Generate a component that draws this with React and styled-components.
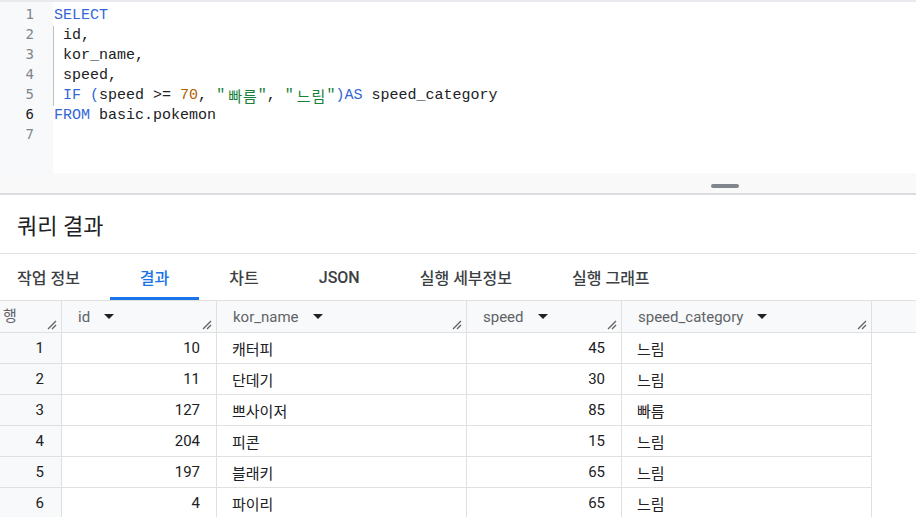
import React from 'react';
import styled, { createGlobalStyle } from 'styled-components';

const GlobalStyle = createGlobalStyle`
  body {
    margin: 0;
    background: #ffffff;
    font-family: Roboto, "Noto Sans CJK KR", sans-serif;
    color: #202124;
  }
`;

const Page = styled.div`
  width: 916px;
  height: 517px;
  overflow: hidden;
  display: flex;
  flex-direction: column;
`;

const Editor = styled.div`
  display: flex;
  height: 171px;
  flex-shrink: 0;
  border-top: 2px solid #e8eaed;
`;

const Gutter = styled.div`
  width: 53px;
  background: #f8f9fa;
  padding-top: 2px;
  box-sizing: border-box;
`;

const LineNo = styled.div`
  height: 20px;
  line-height: 20px;
  padding-right: 19px;
  text-align: right;
  font-family: "DejaVu Sans Mono", monospace;
  font-size: 14px;
  color: ${(p) => (p.current ? '#202124' : '#80868b')};
`;

const Code = styled.div`
  flex: 1;
  padding-top: 4px;
  padding-left: 1px;
  font-family: "Liberation Mono", monospace;
  font-size: 15px;
  color: #202124;
`;

const CodeLine = styled.div`
  height: 20px;
  line-height: 20px;
  white-space: pre;
  border-left: 1px solid ${(p) => (p.guide ? '#bdc1c6' : 'transparent')};
  margin-left: -1px;
`;

const Kw = styled.span`
  color: #3367d6;
`;

const Num = styled.span`
  color: #b06000;
`;

const Str = styled.span`
  color: #188038;
`;

const Hangul = styled.span`
  display: inline-block;
  height: 20px;
  line-height: 20px;
  vertical-align: top;
  font-family: "Noto Sans CJK KR", sans-serif;
  letter-spacing: 1px;
  padding-left: 3px;
`;

const ResizeBar = styled.div`
  height: 22px;
  flex-shrink: 0;
  background: #f9f9f9;
  border-bottom: 2px solid #dadce0;
  display: flex;
  align-items: center;
  padding-left: 711px;
  padding-top: 6px;
  box-sizing: border-box;
`;

const Handle = styled.div`
  width: 28px;
  height: 4px;
  border-radius: 2px;
  background: #80868b;
`;

const Title = styled.div`
  height: 58px;
  flex-shrink: 0;
  display: flex;
  align-items: center;
  padding-left: 17px;
  font-size: 22px;
  color: #202124;
  border-bottom: 1px solid #e0e0e0;
`;

const Tabs = styled.div`
  display: flex;
  height: 46px;
  flex-shrink: 0;
  border-bottom: 1px solid #e0e0e0;
`;

const Tab = styled.div`
  position: relative;
  display: flex;
  align-items: center;
  padding: 0 30px;
  font-size: 16px;
  font-weight: 500;
  color: ${(p) => (p.active ? '#1a73e8' : '#3c4043')};
  &:first-child {
    padding-left: 17px;
  }
  &::after {
    content: '';
    display: ${(p) => (p.active ? 'block' : 'none')};
    position: absolute;
    left: 0;
    right: 0;
    bottom: 0;
    height: 3px;
    background: #1a73e8;
  }
`;

const COLS = '62px 155px 250px 155px 250px';

const HeadRow = styled.div`
  display: grid;
  grid-template-columns: ${COLS} 1fr;
  height: 31px;
  flex-shrink: 0;
  background: #f8f9fa;
  border-bottom: 1px solid #e0e0e0;
`;

const HeadCell = styled.div`
  position: relative;
  display: flex;
  align-items: center;
  gap: 14px;
  padding-left: ${(p) => (p.rownum ? '3px' : '16px')};
  padding-bottom: ${(p) => (p.rownum ? '4px' : '0')};
  font-size: 15px;
  color: #5f6368;
  border-right: 1px solid #e0e0e0;
  &:last-child {
    border-right: none;
  }
`;

const SortArrow = styled.span`
  width: 0;
  height: 0;
  border-left: 5px solid transparent;
  border-right: 5px solid transparent;
  border-top: 5px solid #202124;
`;

const Grip = styled.svg`
  position: absolute;
  right: 4px;
  bottom: 2px;
`;

const BodyRow = styled.div`
  display: grid;
  grid-template-columns: ${COLS};
  width: 872px;
  height: 31px;
  flex-shrink: 0;
`;

const Cell = styled.div`
  display: flex;
  align-items: center;
  justify-content: ${(p) => (p.right ? 'flex-end' : 'flex-start')};
  padding: 0 ${(p) => (p.rownum ? '17px' : p.right ? '16px' : '0')} 0
    ${(p) => (p.right ? '0' : '15px')};
  font-size: 15px;
  color: #202124;
  background: ${(p) => (p.rownum ? '#f8f9fa' : '#ffffff')};
  border-right: 1px solid #e0e0e0;
  border-bottom: 1px solid #e0e0e0;
`;

const ResizeGrip = () => (
  <Grip width="10" height="10" viewBox="0 0 10 10">
    <line x1="1" y1="9" x2="9" y2="1" stroke="#5f6368" strokeWidth="1.3" />
    <line x1="5" y1="9" x2="9" y2="5" stroke="#5f6368" strokeWidth="1.3" />
  </Grip>
);

const rows = [
  [1, 10, '캐터피', 45, '느림'],
  [2, 11, '단데기', 30, '느림'],
  [3, 127, '쁘사이저', 85, '빠름'],
  [4, 204, '피콘', 15, '느림'],
  [5, 197, '블래키', 65, '느림'],
  [6, 4, '파이리', 65, '느림'],
];

const columns = ['id', 'kor_name', 'speed', 'speed_category'];
const tabs = ['작업 정보', '결과', '차트', 'JSON', '실행 세부정보', '실행 그래프'];

const App = () => (
  <Page>
    <GlobalStyle />
    <Editor>
      <Gutter>
        {[1, 2, 3, 4, 5, 6, 7].map((n) => (
          <LineNo key={n} current={n === 6}>
            {n}
          </LineNo>
        ))}
      </Gutter>
      <Code>
        <CodeLine>
          <Kw>SELECT</Kw>
        </CodeLine>
        <CodeLine guide> id,</CodeLine>
        <CodeLine guide> kor_name,</CodeLine>
        <CodeLine guide> speed,</CodeLine>
        <CodeLine guide>
          {' '}
          <Kw>IF</Kw> <Kw>(</Kw>speed &gt;= <Num>70</Num>,{' '}
          <Str>
            "<Hangul>빠름</Hangul>"
          </Str>
          ,{' '}
          <Str>
            "<Hangul>느림</Hangul>"
          </Str>
          <Kw>)AS</Kw> speed_category
        </CodeLine>
        <CodeLine>
          <Kw>FROM</Kw> basic.pokemon
        </CodeLine>
        <CodeLine />
      </Code>
    </Editor>
    <ResizeBar>
      <Handle />
    </ResizeBar>
    <Title>쿼리 결과</Title>
    <Tabs>
      {tabs.map((t) => (
        <Tab key={t} active={t === '결과'}>
          {t}
        </Tab>
      ))}
    </Tabs>
    <HeadRow>
      <HeadCell rownum>
        행
        <ResizeGrip />
      </HeadCell>
      {columns.map((c) => (
        <HeadCell key={c}>
          {c}
          <SortArrow />
          <ResizeGrip />
        </HeadCell>
      ))}
      <HeadCell />
    </HeadRow>
    {rows.map((r) => (
      <BodyRow key={r[0]}>
        <Cell rownum right>
          {r[0]}
        </Cell>
        <Cell right>{r[1]}</Cell>
        <Cell>{r[2]}</Cell>
        <Cell right>{r[3]}</Cell>
        <Cell>{r[4]}</Cell>
      </BodyRow>
    ))}
  </Page>
);

export default App;
